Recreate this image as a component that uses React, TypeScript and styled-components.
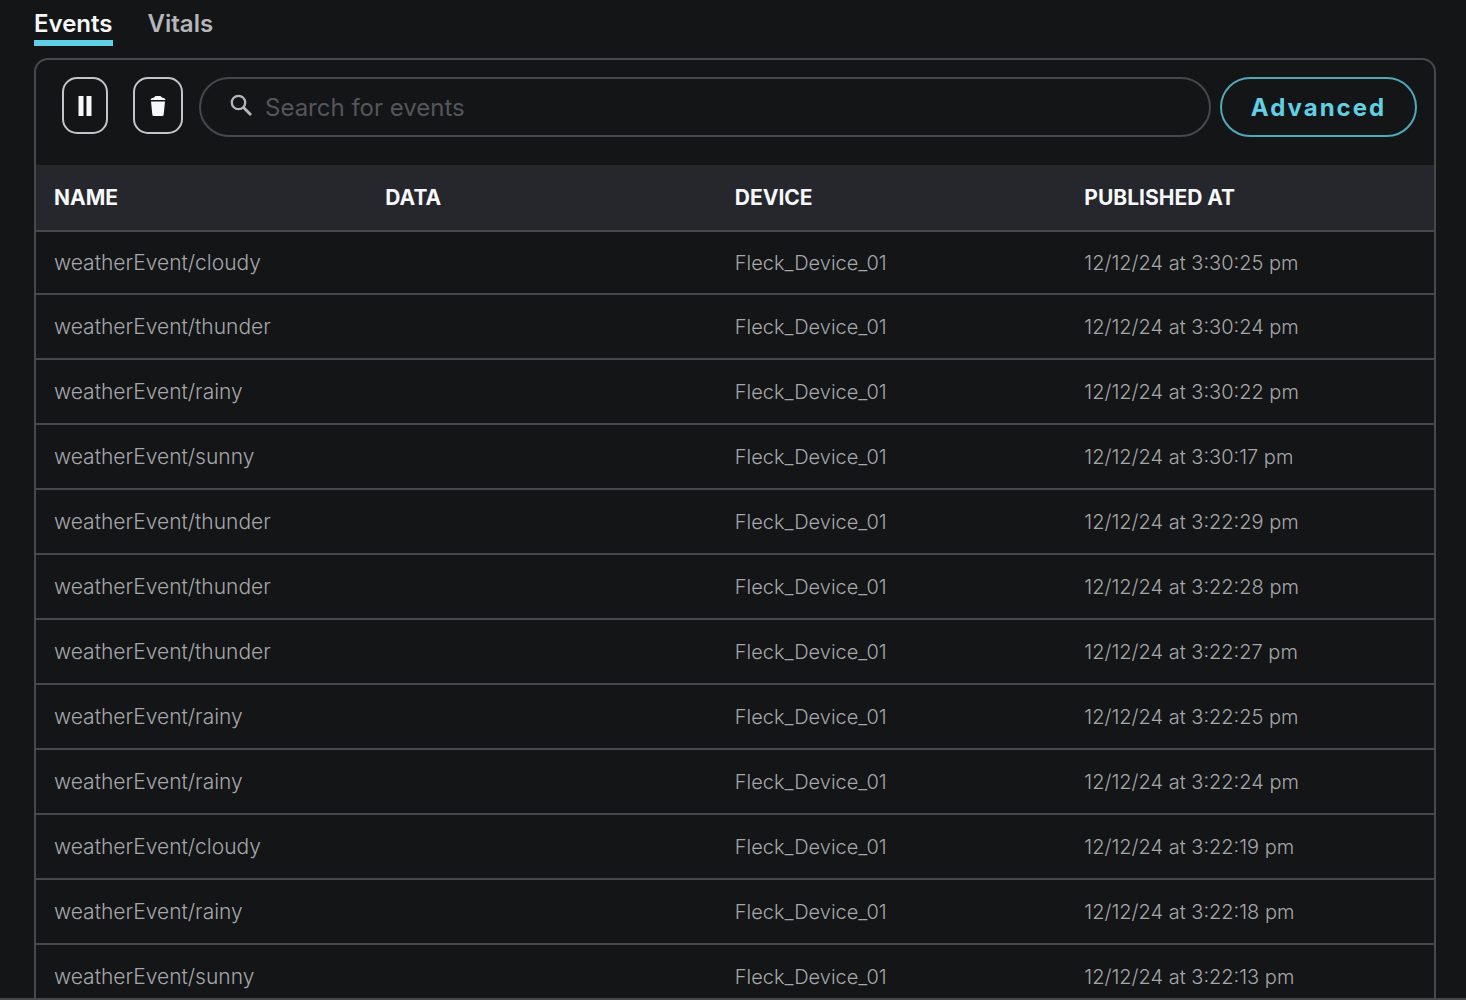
import React, { useState } from "react";
import styled, { createGlobalStyle } from "styled-components";

const color = {
  page: "#141517",
  line: "#47484c",
  head: "#25272c",
  text: "#a6a7aa",
  muted: "#55565b",
  accent: "#62d0e4",
  white: "#f7f8fa",
};

const GlobalStyle = createGlobalStyle`
  * {
    box-sizing: border-box;
  }

  body {
    margin: 0;
    background: ${color.page};
    color: ${color.text};
    font-family: Inter, "Liberation Sans", sans-serif;
  }
`;

const Page = styled.main`
  height: 100vh;
  padding: 6px 30px 0 34px;
  overflow: hidden;
  border-bottom: 2px solid ${color.line};
`;

const Tabs = styled.nav`
  display: flex;
  gap: 35px;
  margin-bottom: 12px;
`;

const Tab = styled.a<{ $active?: boolean }>`
  height: 40px;
  border-bottom: 6px solid ${({ $active }) => ($active ? color.accent : "transparent")};
  color: ${({ $active }) => ($active ? color.white : "#b5b6ba")};
  font-size: 24px;
  font-weight: 600;
  line-height: 36px;
  text-decoration: none;
`;

const Panel = styled.section`
  border: 2px solid ${color.line};
  border-radius: 14px;
  overflow: hidden;
`;

const Toolbar = styled.div`
  display: flex;
  align-items: flex-start;
  padding: 17px 17px 28px 26px;
`;

const IconButton = styled.button<{ $width: number; $gap: number }>`
  display: grid;
  place-items: center;
  flex: none;
  width: ${({ $width }) => $width}px;
  height: 57px;
  margin-right: ${({ $gap }) => $gap}px;
  padding: 0;
  border: 2px solid #c4c5c8;
  border-radius: 15px;
  background: transparent;
  color: ${color.white};
  cursor: pointer;
`;

const SearchBox = styled.label`
  display: flex;
  flex: 1;
  align-items: center;
  gap: 12px;
  height: 60px;
  margin-right: 9px;
  padding: 0 28px 0 29px;
  border: 2px solid ${color.line};
  border-radius: 30px;
  color: #b5b6ba;
`;

const SearchInput = styled.input`
  flex: 1;
  min-width: 0;
  padding: 0;
  border: 0;
  outline: 0;
  background: transparent;
  color: ${color.white};
  font: 400 24px Inter, "Liberation Sans", sans-serif;

  &::placeholder {
    color: ${color.muted};
    opacity: 1;
  }
`;

const AdvancedButton = styled.button`
  height: 60px;
  width: 197px;
  padding: 0;
  border: 2px solid #4fa9b8;
  border-radius: 30px;
  background: transparent;
  color: ${color.accent};
  font: 700 24px Inter, "Liberation Sans", sans-serif;
  letter-spacing: 2px;
  cursor: pointer;
`;

const Table = styled.table`
  width: 100%;
  border-collapse: separate;
  border-spacing: 0;
  table-layout: fixed;
`;

const HeadCell = styled.th<{ $share: string }>`
  width: ${({ $share }) => $share};
  height: 67px;
  padding: 0 18px;
  border-bottom: 2px solid ${color.line};
  background: ${color.head};
  color: ${color.white};
  font-size: 21px;
  font-weight: 700;
  text-align: left;
`;

const Cell = styled.td`
  height: 65px;
  padding: 0 18px;
  border-bottom: 2px solid ${color.line};
  font-size: 20px;
  font-weight: 300;
  white-space: nowrap;
`;

const NameCell = styled(Cell)`
  font-size: 21px;
`;

const Row = styled.tr`
  &:first-child ${Cell} {
    height: 63px;
  }
`;

const PauseIcon = () => (
  <svg width="14" height="20" viewBox="0 0 14 20" fill="currentColor" aria-hidden="true">
    <path d="M.5 0h5v20h-5zM8.500 0h5v20h-5z" />
  </svg>
);

const PlayIcon = () => (
  <svg width="14" height="20" viewBox="0 0 14 20" fill="currentColor" aria-hidden="true">
    <path d="M0 0l14 10L0 20z" />
  </svg>
);

const TrashIcon = () => (
  <svg width="16" height="20" viewBox="0 0 16 20" fill="currentColor" aria-hidden="true">
    <path d="M5.500 0h5l1.500 1.500q3 .2 3.700 2.600H.3Q1 1.700 4 1.500zM1 5.500h14l-1.300 13q-.2 1.500-1.500 1.500H3.800q-1.300 0-1.500-1.500z" />
  </svg>
);

const SearchIcon = () => (
  <svg width="23" height="26" viewBox="0 0 23 26" fill="none" stroke="currentColor" aria-hidden="true">
    <circle cx="8.5" cy="8.5" r="6.7" strokeWidth="2.3" />
    <path d="M13.5 13.5l7.500 7.500" strokeWidth="2.8" />
  </svg>
);

const events = [
  ["cloudy", "3:30:25"],
  ["thunder", "3:30:24"],
  ["rainy", "3:30:22"],
  ["sunny", "3:30:17"],
  ["thunder", "3:22:29"],
  ["thunder", "3:22:28"],
  ["thunder", "3:22:27"],
  ["rainy", "3:22:25"],
  ["rainy", "3:22:24"],
  ["cloudy", "3:22:19"],
  ["rainy", "3:22:18"],
  ["sunny", "3:22:13"],
];

export default function App() {
  const [paused, setPaused] = useState(false);
  const [query, setQuery] = useState("");
  const [rows, setRows] = useState(events);
  const visible = rows.filter(([kind]) => `weatherEvent/${kind}`.includes(query));

  return (
    <>
      <GlobalStyle />
      <Page>
        <Tabs>
          <Tab href="#events" $active>
            Events
          </Tab>
          <Tab href="#vitals">Vitals</Tab>
        </Tabs>
        <Panel>
          <Toolbar>
            <IconButton
              type="button"
              aria-label={paused ? "Resume" : "Pause"}
              $width={46}
              $gap={25}
              onClick={() => setPaused(!paused)}
            >
              {paused ? <PlayIcon /> : <PauseIcon />}
            </IconButton>
            <IconButton type="button" aria-label="Clear events" $width={50} $gap={16} onClick={() => setRows([])}>
              <TrashIcon />
            </IconButton>
            <SearchBox>
              <SearchIcon />
              <SearchInput
                aria-label="Search for events"
                placeholder="Search for events"
                value={query}
                onChange={(e) => setQuery(e.target.value)}
              />
            </SearchBox>
            <AdvancedButton type="button">Advanced</AdvancedButton>
          </Toolbar>
          <Table>
            <thead>
              <tr>
                <HeadCell scope="col" $share="23.7%">NAME</HeadCell>
                <HeadCell scope="col" $share="25%">DATA</HeadCell>
                <HeadCell scope="col" $share="25%">DEVICE</HeadCell>
                <HeadCell scope="col" $share="26.3%">PUBLISHED AT</HeadCell>
              </tr>
            </thead>
            <tbody>
              {visible.map(([kind, time]) => (
                <Row key={time}>
                  <NameCell>weatherEvent/{kind}</NameCell>
                  <Cell />
                  <Cell>Fleck_Device_01</Cell>
                  <Cell>12/12/24 at {time} pm</Cell>
                </Row>
              ))}
            </tbody>
          </Table>
        </Panel>
      </Page>
    </>
  );
}
